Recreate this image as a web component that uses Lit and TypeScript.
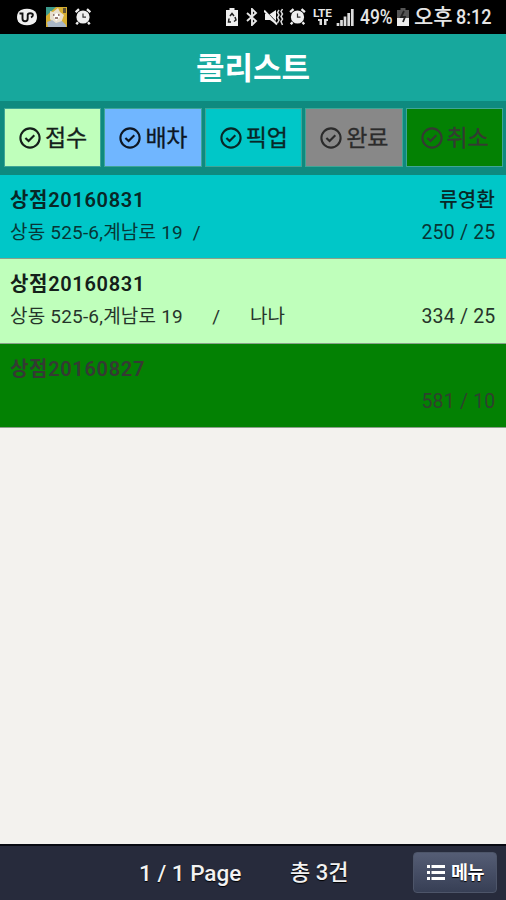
import { LitElement, html, css, svg, nothing } from "lit";
import { customElement, property } from "lit/decorators.js";

interface Call {
  tone: string;
  shop: string;
  rider: string;
  address: string;
  figures: string;
}

const FILTERS = [
  { label: "접수", tone: "received" },
  { label: "배차", tone: "assigned" },
  { label: "픽업", tone: "pickup" },
  { label: "완료", tone: "done" },
  { label: "취소", tone: "cancelled" },
];

const CALLS: Call[] = [
  { tone: "pickup", shop: "상점20160831", rider: "류영환", address: "상동 525-6,계남로 19  /", figures: "250 / 25" },
  { tone: "received", shop: "상점20160831", rider: "", address: "상동 525-6,계남로 19      /      나나", figures: "334 / 25" },
  { tone: "cancelled", shop: "상점20160827", rider: "", address: "", figures: "581 / 10" },
];

const tones = css`
  .received { background: #bfffbb; color: #14201a; }
  .assigned { background: #70b6ff; color: #0d1724; }
  .pickup { background: #00c7c8; color: #082727; }
  .done { background: #888; color: #2b2b2b; }
  .cancelled { background: #038103; color: #353a33; }
`;

const alarm = svg`
  <circle cx="8" cy="9" r="6.6" fill="#eee"/>
  <path d="M.6 4.2 4 1.2M15.4 4.2 12 1.2M3 14.2l-1.700 2M13 14.2l1.700 2" stroke="#eee" stroke-width="2.400"/>
  <path d="M8 5.500V9.200h3" stroke="#333" stroke-width="1.200" fill="none"/>`;

@customElement("status-bar")
export class StatusBar extends LitElement {
  static styles = css`
    :host { display: flex; height: 34px; background: #000; color: #e6e6e6; align-items: center;
      justify-content: space-between; padding: 0 13px 0 16px; box-sizing: border-box; }
    .group { display: flex; align-items: center; }
    svg { display: block; flex: none; }
    .left svg + svg { margin-left: 8px; }
    .text { font: 500 20px/34px Roboto, "Noto Sans CJK KR", sans-serif; white-space: pre; transform-origin: 0 50%; }
    .percent { width: 34px; margin-left: 6px; transform: scaleX(0.87); }
    .period { width: 42px; margin-left: 5px; font-size: 21px; }
    .clock { width: 37px; transform: scaleX(0.9); }
    .bluetooth { margin-left: 8px; }
    .muted { margin-left: 6px; }
    .alarm { margin-left: 5px; }
    .network { margin-left: 7px; }
    .signal { margin-left: 3px; }
    .charge { margin-left: 3px; }
    .lte { font: 700 11px/11px Roboto, sans-serif; }
  `;
  render() {
    return html`
      <div class="group left">
        <svg width="22" height="18" viewBox="0 0 22 18">
          <path d="M5 2Q11-.5 17 2q4 2 4 7t-4 7q-6 2.500-12 0Q1 14 1 9t4-7Z" fill="#f0f0f0"/>
          <path d="M3.500 5.500h3v5q0 2.800 2.600 2.800t2.600-2.800V7q0-1.800 2.600-1.800t2.600 1.800-2 2.300" fill="none" stroke="#111" stroke-width="1.900"/>
        </svg>
        <svg width="21" height="20" viewBox="0 0 21 20">
          <path fill="#d6ae31" d="M0 0h21v20H0z"/><path fill="#3c9a8b" d="M0 0h10L0 9z"/>
          <path fill="#e8dfce" d="M4 4 7 5l5-4 2 4 4 3-3 8-7 1-4-5z"/>
          <path fill="#a9b6c5" d="M1 15l5-2 4 3 6-2 4 4v2H2z"/><path fill="#fff" d="m7 8 4-2 3 4-4 4z"/>
          <path d="M7 8h1.500M12 8h1.500M9 11h3" stroke="#79564b" stroke-width="1.500"/><path fill="#605437" d="M17 1h3v5h-3z"/>
        </svg>
        <svg width="16" height="18" viewBox="0 0 16 18">${alarm}</svg>
      </div>
      <div class="group">
        <svg width="12" height="18" viewBox="0 0 12 18">
          <path d="M3.500 0h5v2H12v16H0V2h3.500z" fill="#eee"/>
          <path d="M4 8 6 5.500 8 8M9 9l1 3-2 1.500M5 14H2.500L3 10.500" fill="none" stroke="#222" stroke-width="1.500"/>
        </svg>
        <svg class="bluetooth" width="12" height="18" viewBox="0 0 12 18">
          <path d="m1 5 9 8-4 4V1l4 4-9 8" fill="none" stroke="#e6e6e6" stroke-width="1.900"/>
        </svg>
        <svg class="muted" width="20" height="18" viewBox="0 0 20 18">
          <path d="M1 6h5l6-4v14l-6-4H1z" fill="#eee"/><path d="m1 2.500 13 13.500" stroke="#000" stroke-width="1.200"/>
          <path d="m0 2.500 13 14" stroke="#eee" stroke-width="2"/>
          <path d="m15 2-1.500 2.400L15 7l-1.500 2.500L15 12l-1.500 3M18.500 1 17 3.600 18.500 6 17 8.500l1.500 2.500-1.500 2.500 1.500 3.500" stroke="#ddd" stroke-width="1.500" fill="none"/>
        </svg>
        <svg class="alarm" width="17" height="18" viewBox="0 0 16 18">${alarm}</svg>
        <svg class="network" width="20" height="18" viewBox="0 0 20 18">
          <text class="lte" x="0" y="9" fill="#e6e6e6" textLength="19" lengthAdjust="spacingAndGlyphs">LTE</text>
          <path d="M5 11h4v6H6.500v-4H5zM11 11h4v2h-1.500v4H11z" fill="#ddd"/>
        </svg>
        <svg class="signal" width="18" height="18" viewBox="0 0 18 18">
          <path d="M2 15v3M5.500 12v6M9 8.500V18M12.700 5v13M16.300 1v17" stroke="#ddd" stroke-width="2.700"/>
        </svg>
        <span class="text percent">49%</span>
        <svg class="charge" width="12" height="18" viewBox="0 0 12 18">
          <path d="M3.500 0h5v2H12v8H0V2h3.500z" fill="#555"/><path d="M0 10h12v8H0z" fill="#eee"/>
          <path d="M7 3 4 9h4l-2 5" stroke="#222" stroke-width="1.800" fill="none"/>
        </svg>
        <span class="text period">오후</span><span class="text clock">8:12</span>
      </div>`;
  }
}

@customElement("filter-button")
export class FilterButton extends LitElement {
  @property() label = "";
  @property() tone = "";
  static styles = [tones, css`
    :host { display: block; min-width: 0; }
    .button { display: flex; align-items: center; height: 59px; box-sizing: border-box; padding: 0 0 0 14px;
      border: 1px solid #3fa596; font: 400 23px/54px "Noto Sans CJK KR", sans-serif; white-space: nowrap; }
    svg { flex: none; margin: 1px 4px 0 0; }
    .label { letter-spacing: -0.2px; height: 57px; -webkit-text-stroke: 0.3px currentColor; }
  `];
  render() {
    return html`<div class="button ${this.tone}">
      <svg width="22" height="22" viewBox="0 0 22 22" fill="none" stroke="currentColor" stroke-width="2.100">
        <circle cx="11" cy="11" r="9.600"/><path d="m6.400 10.900 3.200 3.200 5.700-5.800"/>
      </svg><span class="label">${this.label}</span></div>`;
  }
}

@customElement("call-row")
export class CallRow extends LitElement {
  @property({ attribute: false }) call!: Call;
  static styles = [tones, css`
    :host { display: block; }
    .row { height: 84.300px; box-sizing: border-box; padding: 9px 11px 0 10px; border-bottom: 1px solid #8aa08a;
      font-family: Roboto, "Noto Sans CJK KR", sans-serif; }
    .line { display: flex; justify-content: space-between; height: 32px; line-height: 32px; white-space: pre; }
    .head { font-size: 20px; line-height: 33px; font-weight: 600; letter-spacing: 0.680px; }
    .rider { font-weight: 500; letter-spacing: 0.2px; }
    .detail { font-size: 19px; line-height: 33px; letter-spacing: 0.200px; opacity: 0.9; }
    .figures { font-size: 19.500px; margin-right: -0.5px; }
  `];
  render() {
    const c = this.call;
    return html`<div class="row ${c.tone}">
      <div class="line head"><span>${c.shop}</span>${c.rider ? html`<span class="rider">${c.rider}</span>` : nothing}</div>
      <div class="line detail"><span>${c.address}</span><span class="figures">${c.figures}</span></div>
    </div>`;
  }
}

@customElement("app-root")
export class AppRoot extends LitElement {
  static styles = css`
    :host { display: flex; flex-direction: column; height: 100vh; overflow: hidden; background: #f3f2ee;
      font-family: Roboto, "Noto Sans CJK KR", sans-serif; }
    .title { margin: 0; height: 67px; background: #17a89d; color: #fff; text-align: center;
      font: 700 31px/64px "Noto Sans CJK KR", sans-serif; }
    .filters { display: grid; grid-template-columns: repeat(5, 1fr); gap: 3px; height: 74px; padding: 7px 3px 0 4px;
      box-sizing: border-box; background: #0e8a7f; }
    .calls { flex: 1; }
    .footer { display: flex; align-items: center; height: 56px; box-sizing: border-box; padding: 2px 9px 0 139px;
      border-top: 2px solid #080a12; background: #272b3c; color: #f2f2f2; font-size: 22.500px; font-weight: 500;
      text-shadow: 0 1px 1px #000; white-space: nowrap; }
    .page, .total { line-height: 30px; margin-top: -2px; }
    .page { width: 151px; }
    .total { flex: 1; font-size: 22px; }
    .menu { display: flex; align-items: center; width: 84px; height: 41px; box-sizing: border-box; padding: 0 0 0 13px; margin-top: -3px;
      border: 1px solid #4d5569; border-radius: 4px; background: linear-gradient(#555d75, #373f55);
      color: #fff; font: 700 18.500px/36px "Noto Sans CJK KR", sans-serif; letter-spacing: -0.500px; }
    .menu svg { margin-right: 6px; }
    .menu span { height: 39px; }
  `;
  render() {
    return html`
      <status-bar></status-bar>
      <h1 class="title">콜리스트</h1>
      <nav class="filters">${FILTERS.map((f) => html`<filter-button .label=${f.label} .tone=${f.tone}></filter-button>`)}</nav>
      <main class="calls">${CALLS.map((c) => html`<call-row .call=${c}></call-row>`)}</main>
      <footer class="footer">
        <span class="page">1 / 1 Page</span><span class="total">총 3건</span>
        <div class="menu">
          <svg width="18" height="15" viewBox="0 0 18 15"><path d="M0 1.500h3M4.500 1.500H18M0 7.500h3M4.500 7.500H18M0 13.500h3M4.500 13.500H18" stroke="#fff" stroke-width="2.800"/></svg>
          <span>메뉴</span>
        </div>
      </footer>`;
  }
}
